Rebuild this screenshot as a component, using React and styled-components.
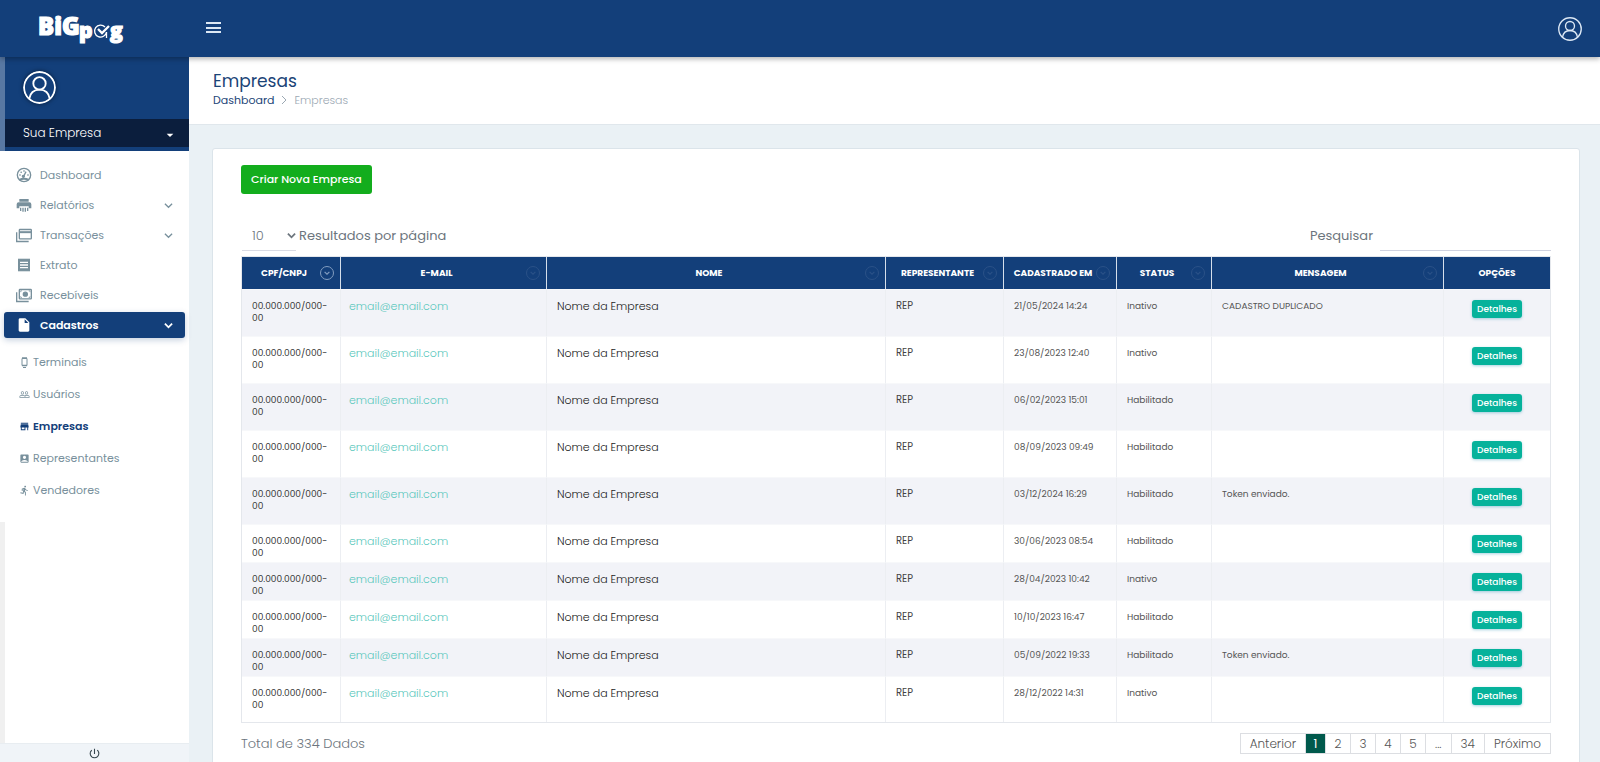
import React from 'react';
import styled, { createGlobalStyle } from 'styled-components';
import {
  MdReceipt,
  MdInsertDriveFile,
  MdPeopleOutline,
  MdStore,
  MdAccountBox,
  MdDirectionsRun,
  MdPowerSettingsNew,
  MdArrowDropDown,
} from 'react-icons/md';

const GlobalStyle = createGlobalStyle`
  * {
    box-sizing: border-box;
  }

  body {
    margin: 0;
    background: #eaf1f5;
    color: #6c757d;
    font-family: Poppins, Inter, 'Open Sans', sans-serif;
    font-size: 13px;
    overflow: hidden;
  }

  button, input, select {
    font-family: inherit;
  }

  a {
    color: inherit;
    text-decoration: none;
  }
`;

const Page = styled.div`
  display: flex;
  flex-direction: column;
  height: 100vh;
`;

const Topbar = styled.header`
  display: flex;
  align-items: center;
  flex: 0 0 57px;
  background: #133f7a;
  color: #dce8f5;
  box-shadow: 0 2px 5px rgba(0, 0, 0, 0.3);
  z-index: 2;
`;

const Brand = styled.a`
  width: 189px;
  padding-left: 36px;
  line-height: 0;
`;

const IconButton = styled.button`
  display: flex;
  padding: 0;
  border: 0;
  background: none;
  color: inherit;
  cursor: pointer;
`;

const MenuButton = styled(IconButton)`
  margin-left: 17px;
`;

const ProfileButton = styled(IconButton)`
  margin-left: auto;
  margin-right: 18px;
`;

const Body = styled.div`
  display: flex;
  flex: 1;
  min-height: 0;
`;

const Sidebar = styled.aside`
  display: flex;
  flex-direction: column;
  flex: 0 0 189px;
  background: white;
`;

const Profile = styled.div`
  height: 94px;
  border-left: 5px solid #5878a3;
  background: #133f7a;
  color: white;
`;

const Avatar = styled.div`
  display: flex;
  height: 62px;
  padding: 14px 0 0 18px;

  svg {
    border-radius: 50%;
    box-shadow: 0 0 4px rgba(0, 0, 0, 0.5);
  }
`;

const CompanyButton = styled.button`
  display: flex;
  align-items: center;
  justify-content: space-between;
  width: 100%;
  height: 28px;
  padding: 0 11px 0 18px;
  border: 0;
  background: #0b1e3d;
  color: white;
  font-size: 12px;
  font-weight: 300;

  svg {
    margin-top: 4px;
  }
`;

const Nav = styled.nav`
  padding: 9px 4px 0;
`;

const NavItem = styled.a`
  display: flex;
  align-items: center;
  gap: 8px;
  height: ${props => (props.$active ? 26 : 30)}px;
  margin-top: ${props => (props.$active ? 2 : 0)}px;
  padding: 0 12px;
  border-radius: 3px;
  background: ${props => (props.$active ? '#133f7a' : 'none')};
  color: ${props => (props.$active ? 'white' : '#78909c')};
  font-size: 11px;
  font-weight: ${props => (props.$active ? 600 : 400)};
  box-shadow: ${props => (props.$active ? '0 2px 6px rgba(19, 63, 122, 0.25)' : 'none')};

  span {
    flex: 1;
  }
`;

const SubNav = styled.div`
  padding: 8px 0 0 15px;
`;

const SubItem = styled.a`
  display: flex;
  align-items: center;
  gap: 3px;
  height: 32px;
  color: ${props => (props.$active ? '#133f7a' : '#78909c')};
  font-size: 11px;
  font-weight: ${props => (props.$active ? 600 : 400)};
`;

const Track = styled.div`
  flex: 1;
  margin-top: 16px;
  border-left: 5px solid #f0f0f0;
`;

const SidebarFooter = styled.footer`
  display: flex;
  justify-content: center;
  align-items: center;
  height: 19px;
  border-top: 1px solid #e8edf1;
  background: #f0f4f8;
  color: #37474f;
`;

const Main = styled.main`
  flex: 1;
  min-width: 0;
`;

const PageHeader = styled.div`
  height: 68px;
  padding: 12px 24px 0;
  border-bottom: 1px solid #e0e7ec;
  background: white;
`;

const Title = styled.h1`
  margin: 0;
  color: #1b4477;
  font-size: 17px;
  font-weight: 400;
  line-height: 24px;
`;

const Breadcrumb = styled.nav`
  display: flex;
  align-items: center;
  gap: 7px;
  color: #9ba8b3;
  font-size: 11px;
  font-weight: 300;
  line-height: 14px;

  a {
    color: #1b4477;
    font-weight: 400;
  }
`;

const Card = styled.section`
  margin: 23px 20px 0 23px;
  padding: 16px 28px 24px;
  border: 1px solid #dbe4ea;
  border-radius: 3px;
  background: white;
`;

const CreateButton = styled.button`
  display: block;
  height: 29px;
  padding: 0 10px;
  border: 0;
  border-radius: 3px;
  background: #13ad1d;
  color: white;
  font-size: 11px;
  font-weight: 500;
`;

const Controls = styled.div`
  display: flex;
  justify-content: space-between;
  height: 30px;
  margin: 27px 0 5px 1px;
  font-size: 13px;
`;

const LengthControl = styled.label`
  display: flex;
  align-items: center;
  gap: 3px;
`;

const SelectBox = styled.span`
  display: flex;
  align-items: center;
  height: 30px;
  border-bottom: 1px solid #d9dbe4;

  select {
    appearance: none;
    width: 45px;
    height: 24px;
    padding: 0 0 0 10px;
    border: 0;
    background: none;
    color: inherit;
    font-size: 13px;
    font-weight: 300;
  }
`;

const SearchControl = styled.label`
  display: flex;
  align-items: center;
  gap: 7px;

  input {
    width: 171px;
    height: 30px;
    border: 0;
    border-bottom: 1px solid #cfd2e0;
    outline: 0;
    background: none;
  }
`;

const Table = styled.table`
  width: 100%;
  border: 1px solid #e4e7ec;
  border-spacing: 0;
  table-layout: fixed;
`;

const HeadCell = styled.th`
  height: 32px;
  padding: 0 6px;
  border-left: ${props => (props.$first ? 0 : '1px solid #d5dfeb')};
  background: #133f7a;
  color: white;
  font-size: 9px;
  font-weight: 700;
`;

const HeadInner = styled.div`
  display: flex;
  align-items: center;
  white-space: nowrap;

  span {
    flex: 1;
  }
`;

const SortButton = styled.button`
  display: flex;
  align-items: center;
  justify-content: center;
  width: 14px;
  height: 14px;
  padding: 0;
  border: 1px solid currentColor;
  border-radius: 50%;
  background: none;
  color: ${props => (props.$sorted ? '#829dc0' : '#2a5187')};
`;

const Row = styled.tr`
  height: ${props => (props.$tall ? 47 : 38)}px;

  &:nth-child(odd) {
    background: #f2f3f8;
  }

  &:last-child {
    height: 46px;
  }
`;

const Cell = styled.td`
  padding: ${props => (props.$align ? '10px 0 0' : '10px 8px 0 10px')};
  border-left: ${props => (props.$first ? 0 : '1px solid #eceef2')};
  border-top: 1px solid #f7f8fa;
  color: ${props => props.$color || '#555'};
  font-size: ${props => props.$size || 9}px;
  font-weight: ${props => props.$weight || 400};
  line-height: 12px;
  text-align: ${props => props.$align || 'left'};
  vertical-align: top;
`;

const EmailCell = styled(Cell)`
  padding-left: 8px;
`;

const DetailsButton = styled.button`
  display: block;
  height: 18px;
  margin: 0 auto;
  padding: 0 5px;
  border: 0;
  border-radius: 3px;
  background: #06b29b;
  color: white;
  font-size: 9px;
  font-weight: 500;
  box-shadow: 0 1px 3px rgba(6, 130, 170, 0.35);
`;

const TableFooter = styled.div`
  display: flex;
  justify-content: space-between;
  padding-top: 10px;
  font-size: 13px;
  font-weight: 300;
  line-height: 22px;
`;

const Pagination = styled.div`
  display: flex;
  height: 21px;
  border: 1px solid #dcdee2;
`;

const PageButton = styled.button`
  min-width: ${props => (props.$current ? 20 : 25)}px;
  padding: 0 ${props => (props.$wide ? 9 : 7)}px;
  border: 0;
  border-left: ${props => (props.$first ? 0 : '1px solid #dcdee2')};
  background: ${props => (props.$current ? '#00594c' : 'white')};
  color: ${props => (props.$current ? 'white' : '#555')};
  font-size: 12px;
  font-weight: ${props => (props.$current ? 400 : 300)};
`;

const UserCircle = ({ size }) => (
  <svg width={size} height={size} viewBox="0 0 32 32" fill="none" stroke="currentColor" strokeWidth="1.8">
    <circle cx="16" cy="16" r="15" />
    <circle cx="16" cy="12" r="6" />
    <path d="M6 27c1-6 5-9 10-9s9 3 10 9" />
  </svg>
);

const Logo = () => (
  <svg width="92" height="48" viewBox="0 0 92 48" role="img" aria-label="BiGpag">
    <g fill="white" stroke="white" fontFamily="'Open Sans', sans-serif" fontWeight="800">
      <text x="2" y="30" fontSize="24" strokeWidth="1.2">BiG</text>
      <text x="43" y="33" fontSize="21" strokeWidth="1.2">p</text>
      <text x="74" y="33" fontSize="21" strokeWidth="1.2">g</text>
    </g>
    <g fill="none" stroke="white">
      <path d="M69 22a6 6 0 1 0 1.500 5v6" strokeWidth="1.300" />
      <path d="M62 24l4 4 7-7" strokeWidth="2.300" />
    </g>
  </svg>
);

const Chevron = ({ size = 9, weight = 2 }) => (
  <svg width={size} height={size} viewBox="0 0 10 10" fill="none" stroke="currentColor" strokeWidth={weight}>
    <path d="M1 3l4 4 4-4" />
  </svg>
);

const CrumbArrow = () => (
  <svg width="6" height="8" viewBox="0 0 6 8" fill="none" stroke="currentColor">
    <path d="M1 0l4 4-4 4" />
  </svg>
);

const MenuIcon = () => (
  <svg width="15" height="14" viewBox="0 0 15 14" fill="currentColor">
    <path d="M0 0h15v2H0zM0 5h15v2H0zM0 9h15v2H0z" />
  </svg>
);

const GaugeIcon = () => (
  <svg width="16" height="16" viewBox="0 0 24 24" fill="none" stroke="currentColor" strokeWidth="2">
    <circle cx="12" cy="12" r="10" />
    <path d="M5 19.500c4-2 10-2 14 0" strokeWidth="3" />
    <path d="M11 15l4-8M5 12h2M17 12h2M7 7l1.500 1.500M12 5v2" />
    <circle cx="11" cy="14" r="1.500" fill="currentColor" />
  </svg>
);

const PrinterIcon = () => (
  <svg width="16" height="16" viewBox="0 0 24 24" fill="currentColor">
    <path d="M5 3h14v4H5zM4 8h16a3 3 0 0 1 3 3v6h-4v-3H5v3H1v-6a3 3 0 0 1 3-3z" />
    <path d="M6 16h2v5H6zM9.500 16h2v6h-2zM13 16h2v6h-2zM16.500 16h2v5h-2z" />
  </svg>
);

const CardsIcon = ({ money }) => (
  <svg width="16" height="15" viewBox="0 0 24 22" fill="none" stroke="currentColor" strokeWidth="2">
    <path d="M1 6v14h18" />
    <rect x="5" y="2" width="18" height="14" rx="1" />
    {money ? (
      <>
        <circle cx="14" cy="9" r="3" fill="currentColor" />
        <path d="M7 6v-2h2M21 6v-2h-2M7 12v2h2M21 12v2h-2" strokeWidth="1" />
      </>
    ) : (
      <path d="M5 6h18" strokeWidth="3" />
    )}
  </svg>
);

const TerminalIcon = () => (
  <svg width="11" height="11" viewBox="0 0 11 11" fill="none" stroke="currentColor">
    <path d="M3 1.500h5v7H3z" />
    <path d="M3 1h5M3 8.500h5" strokeWidth="1.600" />
    <path d="M4 10.500h3" />
  </svg>
);

const navItems = [
  { label: 'Dashboard', icon: <GaugeIcon /> },
  { label: 'Relatórios', icon: <PrinterIcon />, open: true },
  { label: 'Transações', icon: <CardsIcon />, open: true },
  { label: 'Extrato', icon: <MdReceipt size={16} /> },
  { label: 'Recebíveis', icon: <CardsIcon money /> },
  { label: 'Cadastros', icon: <MdInsertDriveFile size={16} />, open: true, active: true },
];

const subItems = [
  { label: 'Terminais', icon: <TerminalIcon /> },
  { label: 'Usuários', icon: <MdPeopleOutline size={11} /> },
  { label: 'Empresas', icon: <MdStore size={11} />, active: true },
  { label: 'Representantes', icon: <MdAccountBox size={11} /> },
  { label: 'Vendedores', icon: <MdDirectionsRun size={11} /> },
];

const columns = [
  { label: 'CPF/CNPJ', width: 98 },
  { label: 'E-MAIL', width: 206 },
  { label: 'NOME' },
  { label: 'REPRESENTANTE', width: 118 },
  { label: 'CADASTRADO EM', width: 113 },
  { label: 'STATUS', width: 95 },
  { label: 'MENSAGEM', width: 232 },
  { label: 'OPÇÕES', width: 107 },
];

const companies = [
  { date: '21/05/2024 14:24', status: 'Inativo', message: 'CADASTRO DUPLICADO', tall: true },
  { date: '23/08/2023 12:40', status: 'Inativo', tall: true },
  { date: '06/02/2023 15:01', status: 'Habilitado', tall: true },
  { date: '08/09/2023 09:49', status: 'Habilitado', tall: true },
  { date: '03/12/2024 16:29', status: 'Habilitado', message: 'Token enviado.', tall: true },
  { date: '30/06/2023 08:54', status: 'Habilitado' },
  { date: '28/04/2023 10:42', status: 'Inativo' },
  { date: '10/10/2023 16:47', status: 'Habilitado' },
  { date: '05/09/2022 19:33', status: 'Habilitado', message: 'Token enviado.' },
  { date: '28/12/2022 14:31', status: 'Inativo' },
];

const pages = ['Anterior', '1', '2', '3', '4', '5', '...', '34', 'Próximo'];

const App = () => {
  return (
    <Page>
      <GlobalStyle />
      <Topbar>
        <Brand href="#"><Logo /></Brand>
        <MenuButton aria-label="Menu"><MenuIcon /></MenuButton>
        <ProfileButton aria-label="Perfil"><UserCircle size={24} /></ProfileButton>
      </Topbar>

      <Body>
        <Sidebar>
          <Profile>
            <Avatar><UserCircle size={33} /></Avatar>
            <CompanyButton>Sua Empresa <MdArrowDropDown size={16} /></CompanyButton>
          </Profile>
          <Nav>
            {navItems.map(item => (
              <NavItem key={item.label} href="#" $active={item.active}>
                {item.icon}
                <span>{item.label}</span>
                {item.open && <Chevron weight={item.active ? 2 : 1.4} />}
              </NavItem>
            ))}
            <SubNav>
              {subItems.map(item => (
                <SubItem key={item.label} href="#" $active={item.active}>
                  {item.icon}
                  {item.label}
                </SubItem>
              ))}
            </SubNav>
          </Nav>
          <Track />
          <SidebarFooter>
            <IconButton aria-label="Sair"><MdPowerSettingsNew size={13} /></IconButton>
          </SidebarFooter>
        </Sidebar>

        <Main>
          <PageHeader>
            <Title>Empresas</Title>
            <Breadcrumb>
              <a href="#">Dashboard</a>
              <CrumbArrow />
              <span>Empresas</span>
            </Breadcrumb>
          </PageHeader>

          <Card>
            <CreateButton>Criar Nova Empresa</CreateButton>
            <Controls>
              <LengthControl>
                <SelectBox>
                  <select defaultValue="10">
                    <option>10</option>
                    <option>25</option>
                  </select>
                  <Chevron />
                </SelectBox>
                Resultados por página
              </LengthControl>
              <SearchControl>
                Pesquisar
                <input type="search" />
              </SearchControl>
            </Controls>

            <Table>
              <colgroup>
                {columns.map(column => (
                  <col key={column.label} width={column.width} />
                ))}
              </colgroup>
              <thead>
                <tr>
                  {columns.map((column, index) => (
                    <HeadCell key={column.label} $first={index === 0}>
                      <HeadInner>
                        <span>{column.label}</span>
                        {column.label !== 'OPÇÕES' && (
                          <SortButton $sorted={index === 0} aria-label={`Ordenar ${column.label}`}>
                            <Chevron size={6} />
                          </SortButton>
                        )}
                      </HeadInner>
                    </HeadCell>
                  ))}
                </tr>
              </thead>
              <tbody>
                {companies.map(company => (
                  <Row key={company.date} $tall={company.tall}>
                    <Cell $first $color="#333">00.000.000/000-00</Cell>
                    <EmailCell $size={11} $weight={300} $color="#5cc8bd"><a href="#">email@email.com</a></EmailCell>
                    <Cell $size={11} $weight={300} $color="#222">Nome da Empresa</Cell>
                    <Cell $size={10} $color="#444">REP</Cell>
                    <Cell>{company.date}</Cell>
                    <Cell>{company.status}</Cell>
                    <Cell>{company.message}</Cell>
                    <Cell $align="center"><DetailsButton>Detalhes</DetailsButton></Cell>
                  </Row>
                ))}
              </tbody>
            </Table>

            <TableFooter>
              <span>Total de 334 Dados</span>
              <Pagination>
                {pages.map((page, index) => (
                  <PageButton
                    key={page}
                    $first={index === 0}
                    $wide={page.length > 1}
                    $current={page === '1'}
                  >
                    {page}
                  </PageButton>
                ))}
              </Pagination>
            </TableFooter>
          </Card>
        </Main>
      </Body>
    </Page>
  );
};

export default App;
